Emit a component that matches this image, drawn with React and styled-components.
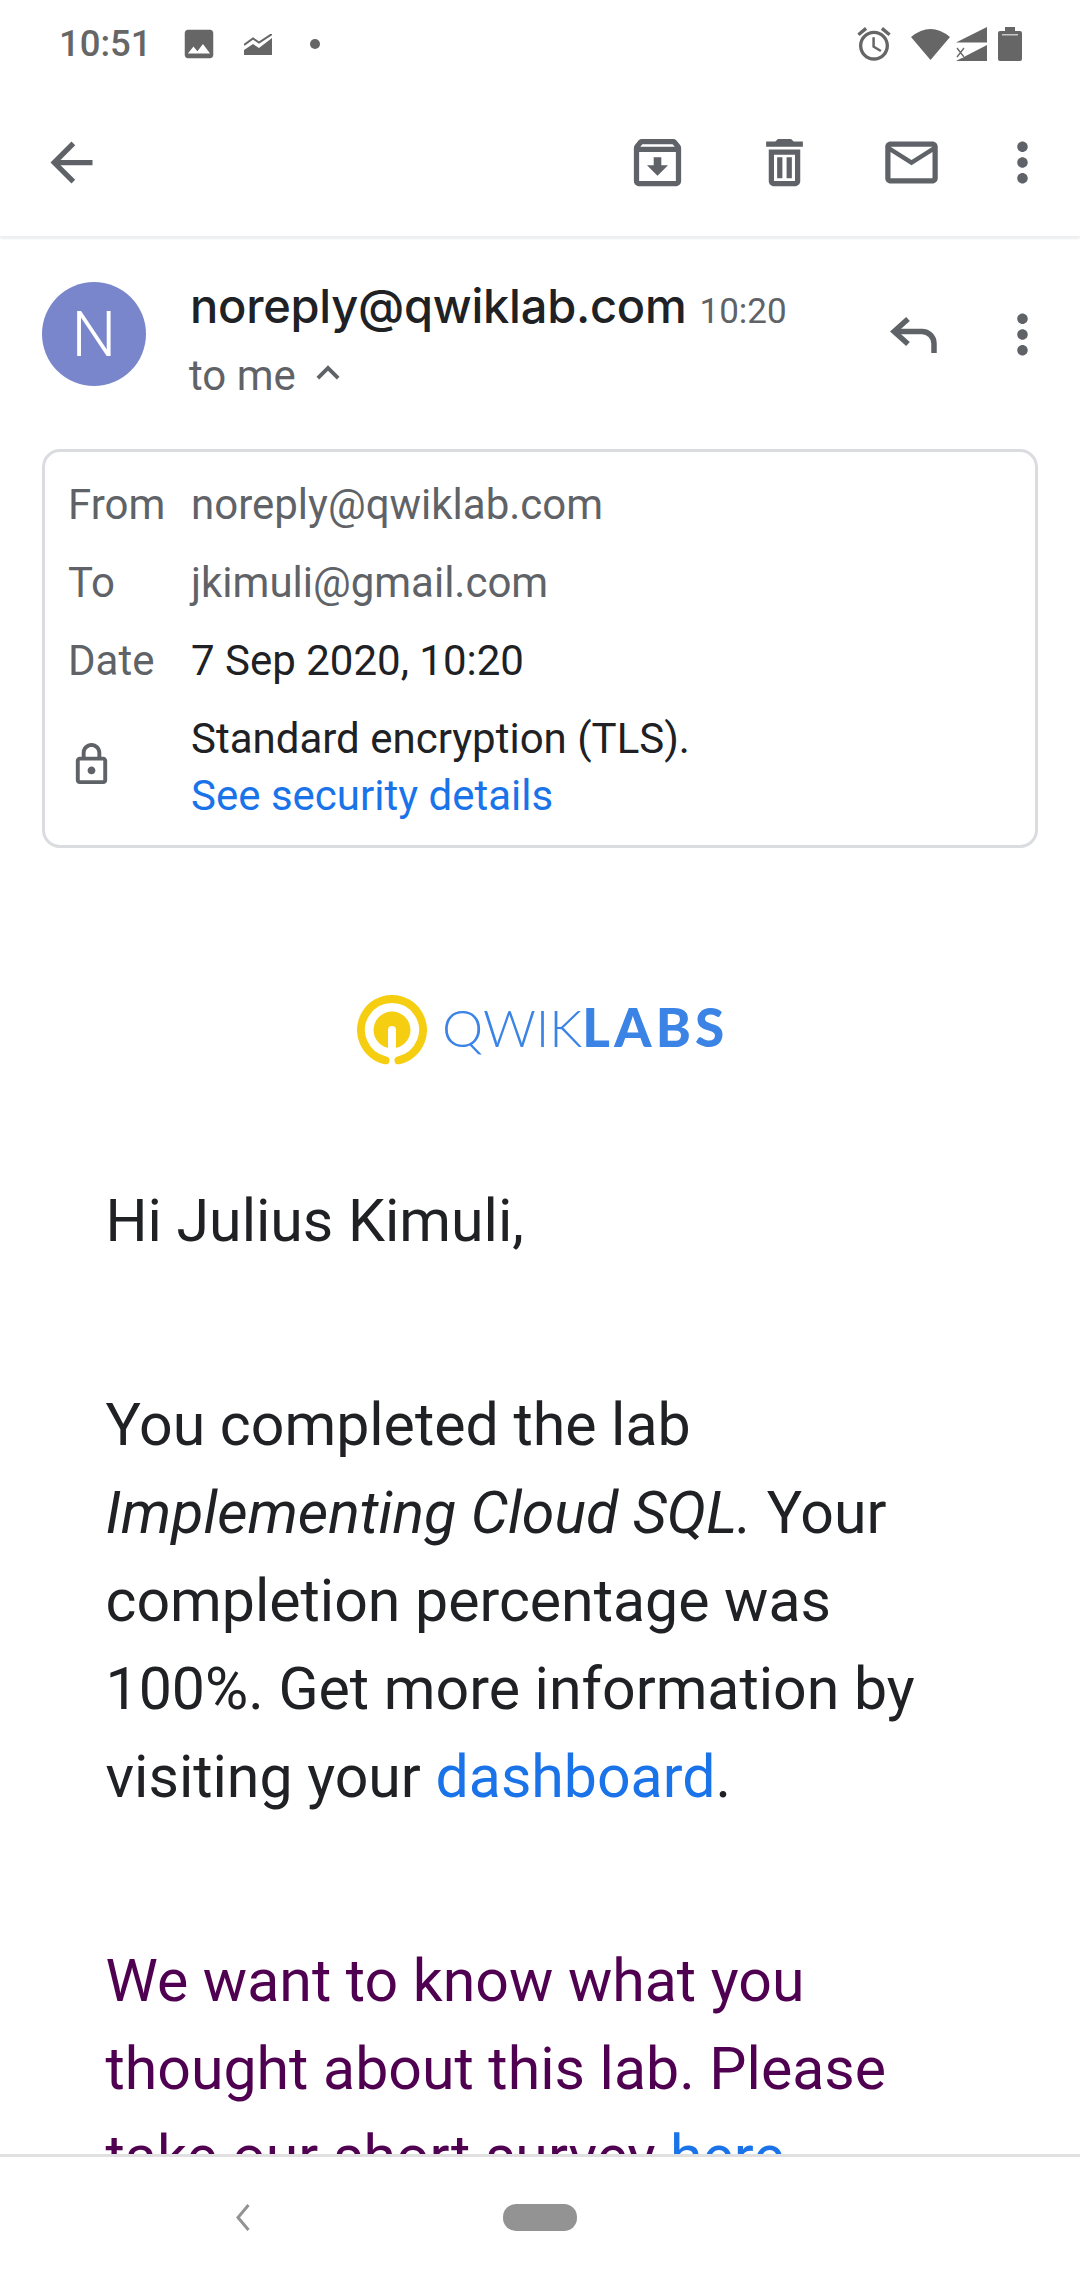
import React from "react";
import styled, { createGlobalStyle } from "styled-components";

const Global = createGlobalStyle`
  html, body { margin: 0; padding: 0; background: #fff; }
  body { font-family: Roboto, "Liberation Sans", sans-serif; }
  * { box-sizing: border-box; }
`;

const Screen = styled.div`
  width: 1080px;
  height: 2280px;
  display: flex;
  flex-direction: column;
  overflow: hidden;
  background: #fff;
`;

const StatusBar = styled.div`
  height: 88px;
  flex: none;
  display: flex;
  align-items: center;
  padding: 0 58px 0 59px;
  color: #666;
`;
const Clock = styled.span`
  width: 92px;
  font-size: 36.5px;
  font-weight: 500;
  color: #666;
  line-height: 1;
`;
const StatusGlyph = styled.svg`
  flex: none;
  display: block;
  fill: currentColor;
  margin-left: ${(p) => p.$gap || 0}px;
`;
const Spacer = styled.div`
  flex: 1;
`;

const Toolbar = styled.div`
  height: 148px;
  flex: none;
  display: flex;
  align-items: center;
  padding: 0 26px 0 40px;
  background: #fff;
  box-shadow: 0 3px 2px #eceef0;
  position: relative;
  z-index: 1;
`;
const Icon = styled.svg`
  flex: none;
  display: block;
  fill: #5f6368;
`;
const ToolActions = styled.div`
  display: flex;
  align-items: center;
  gap: 64px;
`;
const OverflowIcon = styled(Icon)`
  margin-left: -16px;
`;

const Scroller = styled.main`
  flex: 1;
  min-height: 0;
  overflow: hidden;
`;

const Header = styled.header`
  display: flex;
  align-items: flex-start;
  padding: 46px 26px 0 42px;
  height: 213px;
`;
const Avatar = styled.div`
  width: 104px;
  height: 104px;
  flex: none;
  border-radius: 50%;
  background: #7986cb;
  color: #fff;
  display: flex;
  align-items: center;
  justify-content: center;
  font-size: 63px;
  font-weight: 300;
`;
const SenderBlock = styled.div`
  flex: 1;
  margin-left: 44px;
  display: flex;
  flex-direction: column;
  margin-top: -1px;
`;
const SenderLine = styled.div`
  display: flex;
  align-items: baseline;
  height: 50px;
  line-height: 50px;
`;
const SenderName = styled.span`
  font-family: Inter, "Open Sans", sans-serif;
  font-weight: 500;
  font-size: 47px;
  letter-spacing: -0.25px;
  color: #202124;
`;
const SenderTime = styled.span`
  margin-left: 13px;
  font-size: 35px;
  color: #5f6368;
`;
const Recipients = styled.div`
  display: flex;
  align-items: center;
  margin-top: 22px;
  margin-left: -1px;
  font-size: 42px;
  line-height: 46px;
  color: #5f6368;
`;
const ChevronIcon = styled(Icon)`
  margin-left: 9px;
  margin-top: -7px;
`;
const HeaderActions = styled.div`
  display: flex;
  align-items: center;
  gap: 54px;
  height: 104px;
`;
const ReplyIcon = styled.svg`
  display: block;
  flex: none;
  fill: none;
  stroke: #5f6368;
  stroke-width: 5.5;
`;

const DetailsCard = styled.section`
  margin: 0 42px;
  height: 399px;
  border: 3px solid #dadce0;
  border-radius: 18px;
  padding: 13px 0 0 23px;
`;
const DetailRow = styled.div`
  display: flex;
  align-items: center;
  height: 78px;
  font-size: 42px;
`;
const DetailLabel = styled.span`
  width: 123px;
  flex: none;
  color: #5f6368;
`;
const DetailValue = styled.span`
  color: ${(p) => (p.$dark ? "#202124" : "#5f6368")};
`;
const SecurityRow = styled.div`
  display: flex;
  align-items: center;
  margin-top: 11px;
  font-size: 42px;
  line-height: 57px;
  color: #202124;
`;
const LockCell = styled.div`
  width: 123px;
  flex: none;
  margin-bottom: 6px;
`;
const LinkLine = styled.div`
  color: #1a73e8;
`;

const LogoRow = styled.div`
  display: flex;
  align-items: center;
  margin: 148px 0 0 357px;
  height: 68px;
`;
const LogoWord = styled.div`
  margin-left: 15px;
  font-family: Lato, sans-serif;
  font-size: 52px;
  line-height: 68px;
  color: #3b84e6;
  margin-top: -6px;
  white-space: nowrap;
`;
const LogoThin = styled.span`
  font-weight: 300;
`;
const LogoBold = styled.span`
  font-weight: 900;
  font-size: 53px;
  letter-spacing: 4.2px;
`;

const Message = styled.article`
  margin-top: 113px;
  padding-left: 105.5px;
  font-size: 59px;
  line-height: 88px;
  color: #202124;
`;
const Para = styled.p`
  margin: 0 0 116px;
  color: ${(p) => p.$color || "inherit"};
`;
const Link = styled.a`
  color: #1a73e8;
  text-decoration: none;
`;

const NavBar = styled.nav`
  height: 126px;
  flex: none;
  border-top: 3px solid #e0e0e0;
  background: #fff;
  display: flex;
  align-items: center;
  padding: 0 0 3px 235px;
`;
const BackGlyph = styled.svg`
  display: block;
  flex: none;
`;
const HomePill = styled.div`
  width: 74px;
  height: 27px;
  margin-left: 253px;
  border-radius: 13px;
  background: #939393;
`;

export default function App() {
  return (
    <Screen>
      <Global />
      <StatusBar>
        <Clock>10:51</Clock>
        <StatusGlyph $gap={29} width="38" height="38" viewBox="0 0 24 24">
          <path d="M21 19V5c0-1.1-.9-2-2-2H5c-1.1 0-2 .9-2 2v14c0 1.1.9 2 2 2h14c1.1 0 2-.9 2-2zM8.5 13.5l2.5 3.01L14.5 12l4.5 6H5l3.5-4.5z" />
        </StatusGlyph>
        <StatusGlyph $gap={26} width="28" height="21" viewBox="0 0 28 21">
          <path d="M0 16 L9 10 L15 14 L28 4 V21 H0Z" />
          <path d="M0 11 L9 4.5 L15 8.5 L28 0" fill="none" stroke="currentColor" strokeWidth="2" />
        </StatusGlyph>
        <StatusGlyph $gap={38} width="10" height="10" viewBox="0 0 10 10">
          <circle cx="5" cy="5" r="5" />
        </StatusGlyph>
        <Spacer />
        <StatusGlyph width="40" height="40" viewBox="0 0 24 24">
          <path d="M22 5.72l-4.6-3.86-1.29 1.53 4.6 3.86L22 5.72zM7.88 3.39L6.6 1.86 2 5.71l1.29 1.53 4.59-3.85zM12.5 8H11v6l4.75 2.85.75-1.23-4-2.37V8zM12 4c-4.97 0-9 4.03-9 9s4.03 9 9 9c4.97 0 9-4.03 9-9s-4.03-9-9-9zm0 16c-3.87 0-7-3.13-7-7s3.13-7 7-7 7 3.13 7 7-3.13 7-7 7z" />
        </StatusGlyph>
        <StatusGlyph $gap={17} width="39" height="32" viewBox="0 0 39 32">
          <path d="M0 9 Q19.5 -7 39 9 L19.5 32Z" />
        </StatusGlyph>
        <StatusGlyph $gap={6} width="31" height="34" viewBox="0 0 31 34">
          <path d="M31 0 V15.5 H0Z" />
          <path d="M31 18 V34 H0Z" />
          <path d="M1 21 L8 30 M8 21 L1 30" stroke="#fff" strokeWidth="3.5" />
          <path d="M1 21 L8 30 M8 21 L1 30" stroke="currentColor" strokeWidth="1.3" />
        </StatusGlyph>
        <StatusGlyph $gap={11} width="24" height="34" viewBox="0 0 24 34">
          <path d="M7 0h10v4h5a2 2 0 0 1 2 2v26a2 2 0 0 1-2 2H2a2 2 0 0 1-2-2V6a2 2 0 0 1 2-2h5z" />
          <rect x="4" y="7" width="16" height="1.5" fill="#c8c8c8" />
        </StatusGlyph>
      </StatusBar>

      <Toolbar>
        <Icon width="63" height="63" viewBox="0 0 24 24">
          <path d="M20 11H7.83l5.59-5.59L12 4l-8 8 8 8 1.41-1.41L7.83 13H20v-2z" />
        </Icon>
        <Spacer />
        <ToolActions>
          <Icon width="63" height="63" viewBox="0 0 24 24">
            <path d="M20.54 5.23l-1.39-1.68C18.88 3.21 18.47 3 18 3H6c-.47 0-.88.21-1.16.55L3.46 5.23C3.17 5.57 3 6.02 3 6.5V19c0 1.1.9 2 2 2h14c1.1 0 2-.9 2-2V6.5c0-.48-.17-.93-.46-1.27zM6.24 5h11.52l.81.97H5.44l.8-.97zM5 19V8h14v11H5zm8.45-9h-2.9v3H8l4 4 4-4h-2.55z" />
          </Icon>
          <Icon width="63" height="63" viewBox="0 0 24 24">
            <path d="M16 9v10H8V9h8m-1.5-6h-5l-1 1H5v2h14V4h-3.5l-1-1zM18 7H6v12c0 1.1.9 2 2 2h8c1.1 0 2-.9 2-2V7z" />
            <path d="M9.2 10h2v8h-2zM12.8 10h2v8h-2z" />
          </Icon>
          <Icon width="63" height="63" viewBox="0 0 24 24">
            <path d="M22 6c0-1.1-.9-2-2-2H4c-1.1 0-2 .9-2 2v12c0 1.1.9 2 2 2h16c1.1 0 2-.9 2-2V6zm-2 0l-8 5-8-5h16zm0 12H4V8l8 5 8-5v10z" />
          </Icon>
          <OverflowIcon width="63" height="63" viewBox="0 0 24 24">
            <path d="M12 8c1.1 0 2-.9 2-2s-.9-2-2-2-2 .9-2 2 .9 2 2 2zm0 2c-1.1 0-2 .9-2 2s.9 2 2 2 2-.9 2-2-.9-2-2-2zm0 6c-1.1 0-2 .9-2 2s.9 2 2 2 2-.9 2-2-.9-2-2-2z" />
          </OverflowIcon>
        </ToolActions>
      </Toolbar>

      <Scroller>
        <Header>
          <Avatar>N</Avatar>
          <SenderBlock>
            <SenderLine>
              <SenderName>noreply@qwiklab.com</SenderName>
              <SenderTime>10:20</SenderTime>
            </SenderLine>
            <Recipients>
              to me
              <ChevronIcon width="46" height="46" viewBox="0 0 24 24">
                <path d="M12 8l-6 6 1.41 1.41L12 10.83l4.59 4.58L18 14z" />
              </ChevronIcon>
            </Recipients>
          </SenderBlock>
          <HeaderActions>
            <ReplyIcon width="47" height="37" viewBox="0 0 47 37">
              <path d="M18 3 L4 15.5 L18 28" />
              <path d="M4 15.5 H32 a12 12 0 0 1 12 12 V37" />
            </ReplyIcon>
            <Icon width="63" height="63" viewBox="0 0 24 24">
              <path d="M12 8c1.1 0 2-.9 2-2s-.9-2-2-2-2 .9-2 2 .9 2 2 2zm0 2c-1.1 0-2 .9-2 2s.9 2 2 2 2-.9 2-2-.9-2-2-2zm0 6c-1.1 0-2 .9-2 2s.9 2 2 2 2-.9 2-2-.9-2-2-2z" />
            </Icon>
          </HeaderActions>
        </Header>

        <DetailsCard>
          <DetailRow>
            <DetailLabel>From</DetailLabel>
            <DetailValue>noreply@qwiklab.com</DetailValue>
          </DetailRow>
          <DetailRow>
            <DetailLabel>To</DetailLabel>
            <DetailValue>jkimuli@gmail.com</DetailValue>
          </DetailRow>
          <DetailRow>
            <DetailLabel>Date</DetailLabel>
            <DetailValue $dark>7 Sep 2020, 10:20</DetailValue>
          </DetailRow>
          <SecurityRow>
            <LockCell>
              <Icon width="47" height="47" viewBox="0 0 24 24">
                <path d="M18 8h-1V6c0-2.76-2.24-5-5-5S7 3.24 7 6v2H6c-1.1 0-2 .9-2 2v10c0 1.1.9 2 2 2h12c1.1 0 2-.9 2-2V10c0-1.1-.9-2-2-2zM9 6c0-1.66 1.34-3 3-3s3 1.34 3 3v2H9V6zm9 14H6V10h12v10zm-6-3c1.1 0 2-.9 2-2s-.9-2-2-2-2 .9-2 2 .9 2 2 2z" />
              </Icon>
            </LockCell>
            <div>
              <div>Standard encryption (TLS).</div>
              <LinkLine>See security details</LinkLine>
            </div>
          </SecurityRow>
        </DetailsCard>

        <LogoRow>
          <svg width="70" height="70" viewBox="0 0 70 70">
            <path d="M28.5 65.3 A31 31 0 1 1 41.5 65.3" fill="none" stroke="#f5ce12" strokeWidth="8" strokeLinecap="round" />
            <circle cx="35" cy="35" r="18.5" fill="#f5ce12" />
            <path d="M35 35 V60" stroke="#fff" strokeWidth="8" strokeLinecap="round" />
          </svg>
          <LogoWord>
            <LogoThin>QWIK</LogoThin>
            <LogoBold>LABS</LogoBold>
          </LogoWord>
        </LogoRow>

        <Message>
          <Para>Hi Julius Kimuli,</Para>
          <Para>
            You completed the lab
            <br />
            <em>Implementing Cloud SQL.</em> Your
            <br />
            completion percentage was
            <br />
            100%. Get more information by
            <br />
            visiting your <Link href="#">dashboard</Link>.
          </Para>
          <Para $color="#500050">
            We want to know what you
            <br />
            thought about this lab. Please
            <br />
            take our short survey <Link href="#">here</Link>.
          </Para>
        </Message>
      </Scroller>

      <NavBar>
        <BackGlyph width="15" height="27" viewBox="0 0 15 27">
          <path d="M13.5 1 L3 13.5 L13.5 26" fill="none" stroke="#939393" strokeWidth="3" />
        </BackGlyph>
        <HomePill />
      </NavBar>
    </Screen>
  );
}
